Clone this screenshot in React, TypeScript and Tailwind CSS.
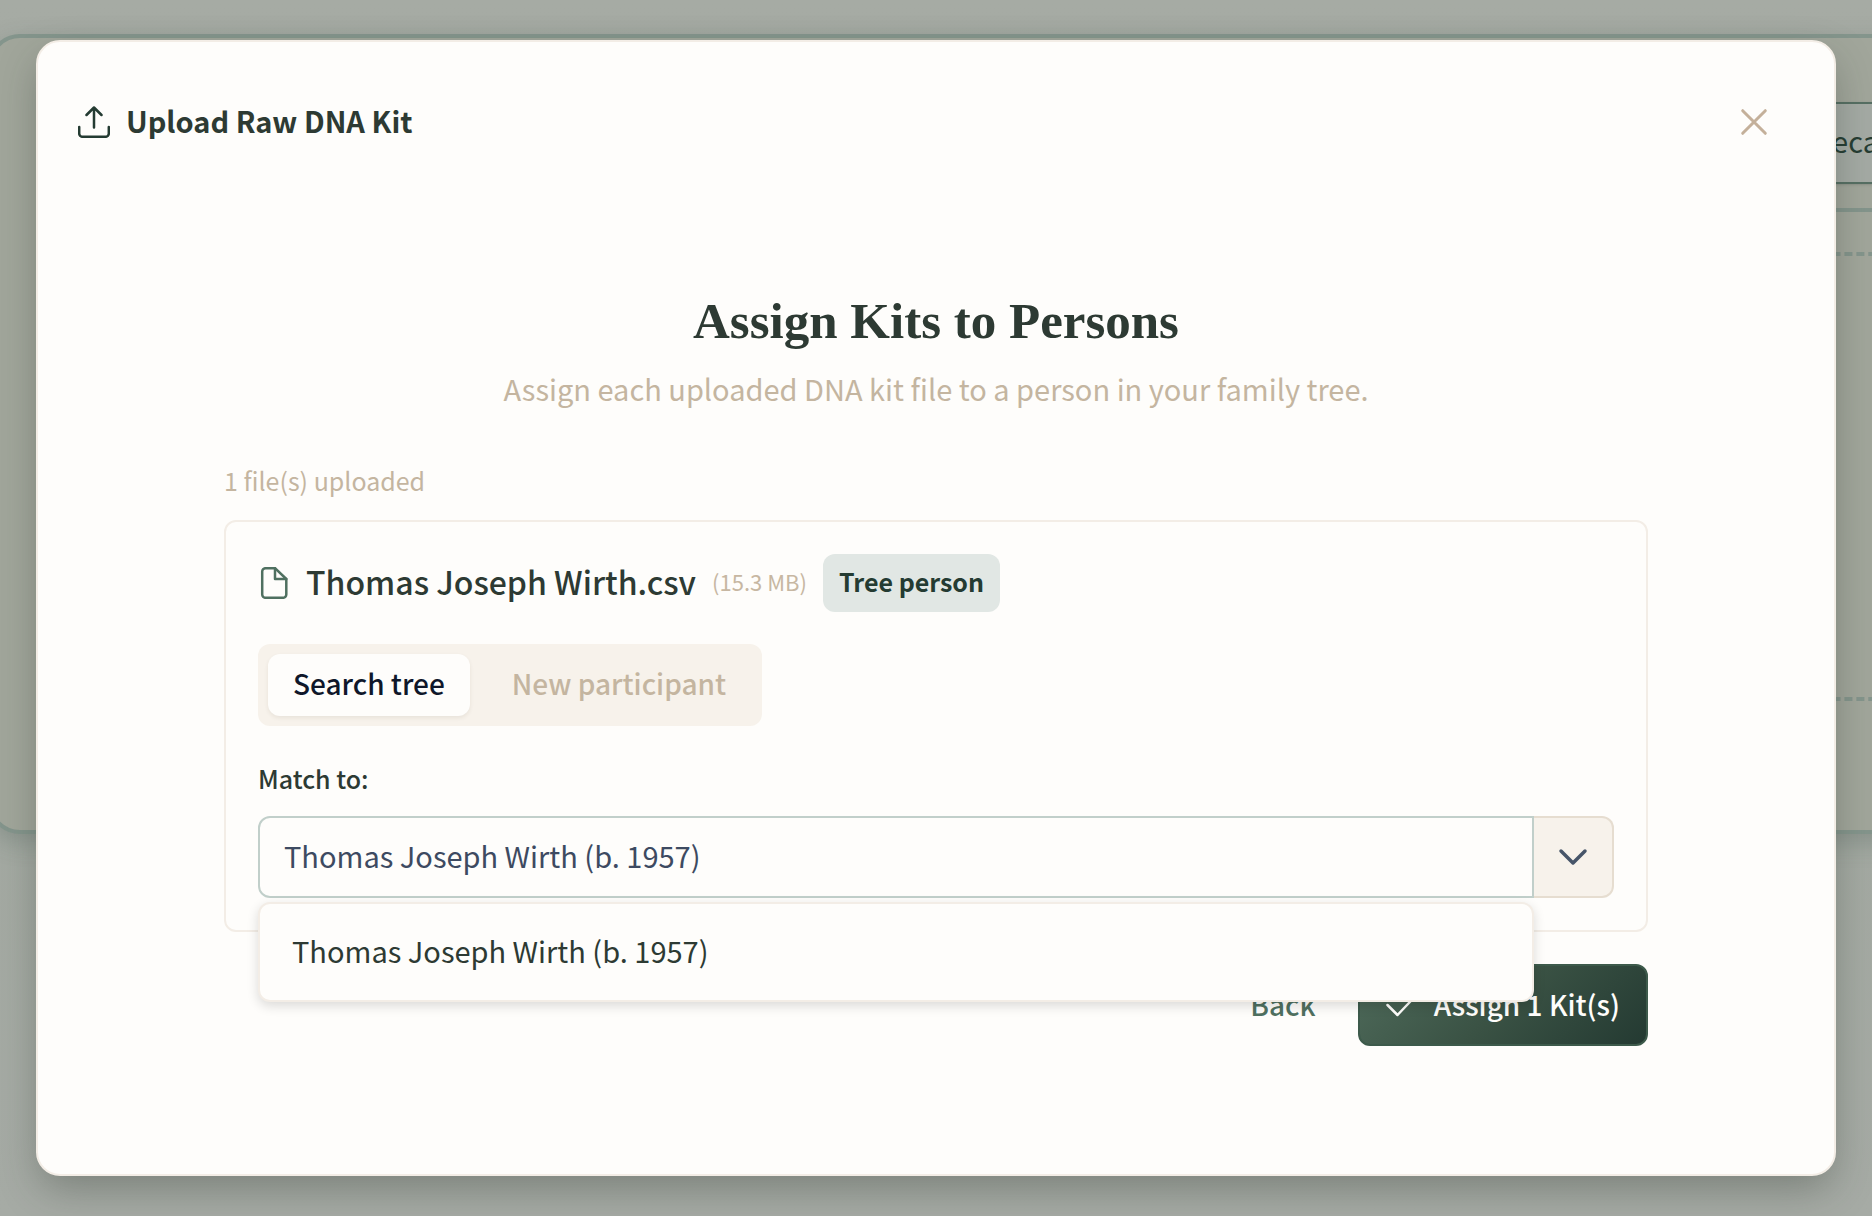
import { ReactNode, useState } from 'react'

const PERSON = 'Thomas Joseph Wirth (b. 1957)'

function Icon({ children, className = '', width = 2 }: { children: ReactNode; className?: string; width?: number }) {
  return (
    <svg
      viewBox="0 0 32 32"
      className={`size-8 shrink-0 ${className}`}
      fill="none"
      stroke="currentColor"
      strokeWidth={width}
      strokeLinecap="round"
      strokeLinejoin="round"
      aria-hidden="true"
    >
      {children}
    </svg>
  )
}

// Dimmed page behind the dialog
function Backdrop() {
  return (
    <div className="absolute inset-0 overflow-hidden bg-[linear-gradient(180deg,#a6aba4_0%,#a2a8a0_50%,#a6aba5_100%)]" aria-hidden="true">
      <div className="mt-[34px] -mr-24 -ml-3 h-[800px] rounded-[32px] border-4 border-[#84958c] bg-[#a1a69b] shadow-[0_8px_24px_rgba(60,85,75,0.25)]">
        <div className="ml-auto flex h-[174px] w-1/2 items-start justify-end border-b-4 border-[#84958c] pt-16">
          <div className="flex h-[82px] w-[320px] items-center border-2 border-[#566f63] bg-[#a4aaa4] pb-1 pl-[168px] text-[29px] text-[#263d33] shadow-sm">
            Recalculate
          </div>
        </div>
        <div className="mt-10 mr-10 ml-auto h-[449px] w-1/2 border-4 border-dashed border-[#84958c]" />
      </div>
    </div>
  )
}

function KitCard() {
  const [tab, setTab] = useState('search')
  const [value, setValue] = useState(PERSON)

  return (
    <div className="rounded-xl border-2 border-[#f3ede6] p-8">
      <div className="flex items-center gap-4">
        <Icon className="text-[#4f7060]" width={2.5}>
          <path d="M7.5 1.2H17L28.3 12V27.5a3.3 3.3 0 0 1-3.3 3.3H7.5a3.3 3.3 0 0 1-3.3-3.3V4.5a3.3 3.3 0 0 1 3.3-3.3Z" />
          <path d="M17 1.2V12H28.3" />
        </Icon>
        <h3 className="pb-1 text-[32px] leading-[50px] font-medium">Thomas Joseph Wirth.csv</h3>
        <span className="pb-1 text-[22px] leading-8 text-[#c7b7a2]">(15.3 MB)</span>
        <span className="rounded-xl bg-[#e1e7e4] px-4 pt-1.5 pb-2.5 text-[25px] leading-[42px] font-bold text-[#243b32]">Tree person</span>
      </div>

      {/* Assignment mode */}
      <div className="mt-8 inline-flex gap-4 rounded-xl bg-[#f7f2eb] p-[10px]" role="tablist">
        <button
          role="tab"
          aria-selected={tab === 'search'}
          onClick={() => setTab('search')}
          className="rounded-xl bg-[#fefdfb] px-[25px] pb-1 text-[28px] leading-[58px] font-medium text-[#0f172a] shadow-[0_2px_4px_rgba(60,50,30,0.08)]"
        >
          Search tree
        </button>
        <button
          role="tab"
          aria-selected={tab === 'new'}
          onClick={() => setTab('new')}
          className="rounded-xl px-[26px] pb-1 text-[28px] leading-[58px] font-medium text-[#c4b5a0]"
        >
          New participant
        </button>
      </div>

      <label htmlFor="match" className="mt-8 mb-4 block pb-0.5 text-[25px] leading-[40px] font-medium">
        Match to:
      </label>
      <div className="flex h-[82px]">
        <div className="relative flex-1">
          <input
            id="match"
            type="text"
            value={value}
            onChange={e => setValue(e.target.value)}
            className="h-full w-full rounded-l-xl border-2 border-[#c1cfca] bg-[#fefdfb] px-6 pb-1 text-[29px] text-[#3d4a61] outline-none"
          />
          {/* Suggestions */}
          <ul
            role="listbox"
            className="absolute top-[86px] left-0 z-10 w-full rounded-xl border-2 border-[#f3ede6] bg-[#fefdfb] py-4 shadow-[0_4px_12px_rgba(0,0,0,0.14)]"
          >
            <li role="option" aria-selected="true" className="px-8 pb-1 text-[29px] leading-[60px]">
              {PERSON}
            </li>
          </ul>
        </div>
        <button aria-label="Show people" className="flex w-20 items-center justify-center rounded-r-xl border-2 border-l-0 border-[#e6ddd0] bg-[#f7f2eb] text-[#475569]">
          <Icon width={3.5}>
            <path d="m4 10 12 12 12-12" />
          </Icon>
        </button>
      </div>
    </div>
  )
}

export default function App() {
  return (
    <div className="relative flex min-h-screen px-9 py-10 font-['Noto_Sans_CJK_SC','Open_Sans',sans-serif] text-[#2d3a33]">
      <Backdrop />

      <div
        role="dialog"
        aria-labelledby="dialog-title"
        className="relative flex-1 rounded-3xl border-2 border-[#f3ede6] bg-[#fefdfb] shadow-[0_16px_40px_-4px_rgba(40,50,40,0.35)]"
      >
        <header className="flex h-40 items-center gap-4 pr-16 pl-10">
          <Icon className="text-[#243b32]" width={2.5}>
            <path d="M1.2 21v6.5a3.3 3.3 0 0 0 3.3 3.3h23a3.3 3.3 0 0 0 3.3-3.3V21" />
            <path d="M8.5 9 16 1.5 23.5 9M16 1.5V21.5" />
          </Icon>
          <h1 id="dialog-title" className="flex-1 pb-1 text-[29px] leading-[48px] font-bold">Upload Raw DNA Kit</h1>
          <button aria-label="Close" className="text-[#c4b09a]">
            <Icon width={3}>
              <path d="m4.7 4.7 22.6 22.6M27.3 4.7 4.7 27.3" />
            </Icon>
          </button>
        </header>

        <main className="mx-auto max-w-[1424px] pt-20 pb-16">
          <h2 className="text-center font-['Liberation_Serif',serif] text-[51px] leading-[78px] font-bold">Assign Kits to Persons</h2>
          <p className="text-center text-[29px] leading-[56px] text-[#c4b5a0]">
            Assign each uploaded DNA kit file to a person in your family tree.
          </p>
          <p className="mt-10 mb-4 text-[25px] leading-[48px] text-[#c4b5a0]">1 file(s) uploaded</p>

          <KitCard />

          <div className="mt-8 flex h-[82px] justify-end gap-4">
            <button className="px-[26px] pb-0.5 text-[28px] font-medium text-[#4f7060]">Back</button>
            <button className="flex items-center gap-4 rounded-xl border-2 border-[#3d5a4b] bg-[linear-gradient(135deg,#4f6b5b_0%,#3a5244_50%,#243a32_100%)] px-[26px] text-[28px] font-medium text-[#fefdfb]">
              <Icon width={2.5}>
                <path d="m1.5 16 10 10 19-20" />
              </Icon>
              <span className="pb-0.5">Assign 1 Kit(s)</span>
            </button>
          </div>
        </main>
      </div>
    </div>
  )
}
